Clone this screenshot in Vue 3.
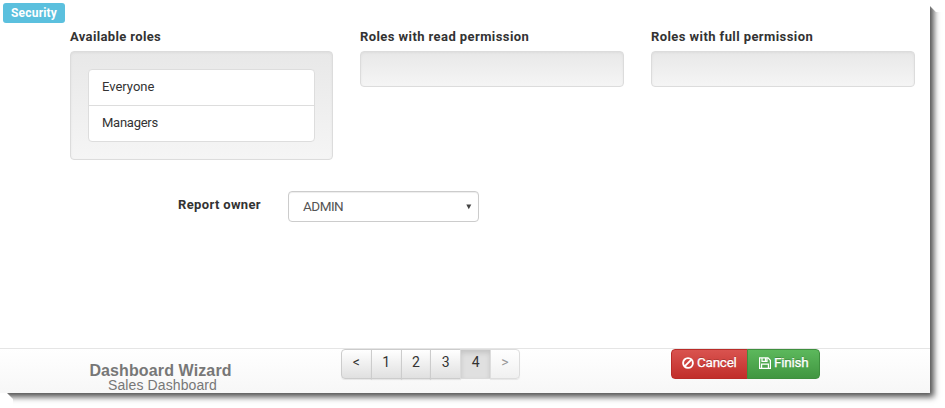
<script setup>
const columns = [
  { title: 'Available roles', roles: ['Everyone', 'Managers'], cls: 'available' },
  { title: 'Roles with read permission', roles: [], cls: 'read' },
  { title: 'Roles with full permission', roles: [], cls: 'full' }
]
const pages = ['<', '1', '2', '3', '4', '>']
</script>

<template>
  <div class="stage">
    <div class="window">
      <main class="content">
        <span class="tag">Security</span>
        <div class="columns">
          <section v-for="c in columns" :key="c.title" class="column">
            <div class="heading" :class="c.cls">{{ c.title }}</div>
            <div class="well">
              <ul v-if="c.roles.length" class="roles">
                <li v-for="r in c.roles" :key="r" :class="r.toLowerCase()">{{ r }}</li>
              </ul>
            </div>
          </section>
        </div>
        <div class="owner">
          <label>Report owner</label>
          <div class="select">
            <span>ADMIN</span>
            <svg width="6" height="6" viewBox="0 0 6 6"><path d="M.3 .5H5.3L2.8 5.2Z" fill="#444" /></svg>
          </div>
        </div>
      </main>
      <footer class="footer">
        <div class="title">
          <strong>Dashboard Wizard</strong>
          <div class="sub">Sales Dashboard</div>
        </div>
        <nav class="pager">
          <button v-for="p in pages" :key="p" :class="{ active: p === '4', disabled: p === '>' }">{{ p }}</button>
        </nav>
        <div class="actions">
          <button class="cancel">
            <svg width="12" height="12" viewBox="0 0 12 12" fill="none" stroke="#fff" stroke-width="1.9"><circle cx="6" cy="6" r="4.9" /><path d="M2.6 9.4L9.4 2.6" /></svg>
            <span>Cancel</span>
          </button>
          <button class="finish">
            <svg width="12" height="12" viewBox="0 0 12 12" fill="none" stroke="#fff" stroke-width="1.2"><path d="M.6 .9H9L11.4 3.3V11.3H.6ZM3 1V4.4H8V1M2.6 11V7.2H9.4V11" /><path d="M6.6 1V4" stroke-width="1.4" /></svg>
            <span>Finish</span>
          </button>
        </div>
      </footer>
    </div>
  </div>
</template>

<style>
body { background: #fff; }
</style>

<style scoped>
* { box-sizing: border-box; }
.stage { width: 945px; height: 408px; overflow: hidden; }
.window {
  width: 930px; height: 393px; display: flex; flex-direction: column;
  background: #fff; color: #333; font: 13px/20px Roboto, sans-serif;
  box-shadow: 4px 4px 6px 0 rgba(0, 0, 0, .68);
  clip-path: polygon(0 0, 930px 0, 930px 6px, 936px 12px, 945px 12px, 945px 408px, 13px 408px, 13px 399px, 7px 393px, 0 393px);
}
.content { height: 348px; padding: 3px 0 0 3px; }
.tag {
  display: flex; width: 62px; height: 20px; padding-left: 8px; border-radius: 3px;
  background: #5bc0de; color: #fff; font-size: 12px; font-weight: 700; letter-spacing: .2px; white-space: nowrap;
}
.columns { display: grid; grid-template-columns: 263px 264px 264px; gap: 27px; padding: 4px 0 0 67px; height: 137px; align-items: start; }
.heading { height: 24px; line-height: 19px; font-weight: 700; white-space: nowrap; letter-spacing: .42px; }
.heading.available { letter-spacing: .36px; }
.well {
  min-height: 36px; padding: 17px; border: 1px solid #dcdcdc; border-radius: 4px;
  background: linear-gradient(#e8e8e8, #f5f5f5); box-shadow: inset 0 1px 3px rgba(0, 0, 0, .05);
}
.roles { margin: 0; padding: 0; list-style: none; border: 1px solid #ddd; border-radius: 4px; background: #fff; }
.roles li { height: 35px; padding: 7px 13px; }
.roles li + li { height: 36px; border-top: 1px solid #ddd; }
.roles .managers { letter-spacing: -.25px; }
.owner { display: flex; padding: 31px 0 0 175px; }
.owner label { width: 110px; padding-top: 4px; font-weight: 700; white-space: nowrap; letter-spacing: .36px; }
.select {
  width: 191px; height: 31px; padding: 0 6px 0 14px; display: flex; align-items: center; justify-content: space-between;
  border: 1px solid #ccc; border-radius: 4px; color: #555; box-shadow: inset 0 1px 1px rgba(0, 0, 0, .075);
}
.select span { font-size: 13.5px; letter-spacing: -.5px; padding-bottom: 2px; }
.footer { height: 45px; display: flex; border-top: 1px solid #e5e5e5; background: linear-gradient(#fff, #f7f7f7); }
.title { width: 341px; padding: 12px 20px 0 0; text-align: center; color: #777; font-family: "Liberation Sans", Arial, sans-serif; white-space: nowrap; }
.title strong { display: block; font-size: 16px; line-height: 19px; letter-spacing: .12px; }
.sub { font-size: 14px; line-height: 10px; padding-left: 4px; letter-spacing: .1px; }
.pager { display: flex; width: 330px; }
button { font: 13.5px/18px Roboto, sans-serif; margin: 0; height: 30px; white-space: nowrap; }
.pager button {
  width: 30.8px; margin-right: -1px; padding: 0 0 4px; border: 1px solid #ccc; color: #333; font-size: 14px;
  background: linear-gradient(#fff, #e0e0e0); box-shadow: inset 0 1px 0 rgba(255, 255, 255, .15), 0 1px 1px rgba(0, 0, 0, .075);
}
.pager button:first-child { border-radius: 4px 0 0 4px; }
.pager button:last-child { width: 30px; border-radius: 0 4px 4px 0; }
.pager .active { background: #e0e0e0; border-color: #dbdbdb; box-shadow: inset 0 3px 5px rgba(0, 0, 0, .125); }
.pager .disabled { color: #999; border-color: #ddd; background: linear-gradient(#fff, #f0f0f0); }
.actions { display: flex; }
.actions button { display: flex; align-items: center; color: #fff; padding: 0 0 3px 10px; letter-spacing: -.25px; text-shadow: 0 -1px 0 rgba(0, 0, 0, .2); -webkit-text-stroke: .25px #fff; }
.actions svg { flex: none; margin-right: 3px; }
.actions span { padding-bottom: 2px; }
.actions .finish { padding-left: 11px; }
.cancel { width: 77px; border: 1px solid #b92c28; border-radius: 4px 0 0 4px; background: linear-gradient(#d9534f, #c12e2a); }
.finish { width: 73px; margin-left: -1px; border: 1px solid #3e8f3e; border-radius: 0 4px 4px 0; background: linear-gradient(#5cb85c, #419641); }
</style>
